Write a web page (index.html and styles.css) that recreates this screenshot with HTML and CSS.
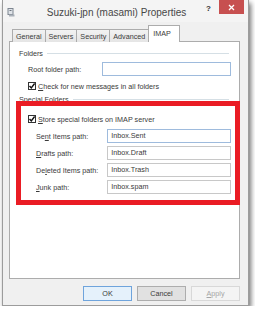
FILE: index.html
```html
<!DOCTYPE html>
<html lang="en">
<head>
    <meta charset="UTF-8">
    <title>Suzuki-jpn (masami) Properties</title>
    <link rel="stylesheet" href="styles.css">
</head>
<body>
<div class="window">
    <div class="titlebar">
        <svg class="app-icon" width="8" height="9" viewBox="0 0 8 9">
            <rect x="1" y="0.5" width="5" height="6" fill="#dfe3e8" stroke="#7d8590"/>
            <rect x="2" y="6.5" width="5.5" height="2" fill="#a9b0b8"/>
            <rect x="2.5" y="2" width="2" height="1" fill="#6b737c"/>
        </svg>
        <div class="title">Suzuki-jpn (masami) Properties</div>
        <div class="help">?</div>
        <div class="close">
            <svg width="7" height="7" viewBox="0 0 7 7">
                <path d="M1 1 L6 6 M6 1 L1 6" stroke="#fff" stroke-width="1.3"/>
            </svg>
        </div>
    </div>

    <div class="body">
        <div class="tabs">
            <div class="tab">General</div>
            <div class="tab">Servers</div>
            <div class="tab">Security</div>
            <div class="tab">Advanced</div>
            <div class="tab selected">IMAP</div>
        </div>

        <div class="panel">
            <div class="group-title"><span>Folders</span></div>
            <div class="row">
                <label class="field-label indent">Root folder path:</label>
                <div class="input focus"></div>
            </div>
            <div class="row check-row">
                <span class="checkbox">
                    <svg width="8" height="8" viewBox="0 0 8 8"><path d="M1.5 4 L3.3 6 L6.6 1.5" fill="none" stroke="#111" stroke-width="1.4"/></svg>
                </span>
                <span><u>C</u>heck for new messages in all folders</span>
            </div>

            <div class="group-title special"><span>Special Folders</span></div>
            <div class="row check-row">
                <span class="checkbox">
                    <svg width="8" height="8" viewBox="0 0 8 8"><path d="M1.5 4 L3.3 6 L6.6 1.5" fill="none" stroke="#111" stroke-width="1.4"/></svg>
                </span>
                <span><u>S</u>tore special folders on IMAP server</span>
            </div>
            <div class="row">
                <label class="field-label sub">Se<u>n</u>t Items path:</label>
                <div class="input focus">Inbox.Sent</div>
            </div>
            <div class="row">
                <label class="field-label sub"><u>D</u>rafts path:</label>
                <div class="input">Inbox.Draft</div>
            </div>
            <div class="row">
                <label class="field-label sub">De<u>l</u>eted Items path:</label>
                <div class="input">Inbox.Trash</div>
            </div>
            <div class="row">
                <label class="field-label sub"><u>J</u>unk path:</label>
                <div class="input">Inbox.spam</div>
            </div>

            <div class="highlight"></div>
        </div>

        <div class="buttons">
            <div class="button default">OK</div>
            <div class="button">Cancel</div>
            <div class="button disabled"><u>A</u>pply</div>
        </div>
    </div>
</div>
</body>
</html>
```

FILE: styles.css
```css
body {
    margin: 0;
    background: #fff;
    font-family: "Liberation Sans", Arial, sans-serif;
    font-size: 7.2px;
    color: #3a3a3a;
}

.window {
    margin-left: 2px;
    width: 245px;
    height: 305px;
    background: #f0f0f0;
    border: 1px solid #9c9c9c;
    border-top: none;
    box-shadow: 2px 3px 5px rgba(0, 0, 0, 0.55);
    display: flex;
    flex-direction: column;
}

.titlebar {
    height: 22px;
    display: flex;
    align-items: center;
    position: relative;
    background: #f4f4f4;
}

.app-icon {
    margin-left: 4px;
    margin-top: 2px;
}

.title {
    flex: 1;
    text-align: center;
    font-size: 10px;
    color: #474747;
    margin-left: 12px;
    margin-top: 2px;
}

.help {
    font-size: 8px;
    font-weight: bold;
    color: #333;
    margin-right: 8px;
    margin-bottom: 6px;
}

.close {
    width: 25px;
    height: 14px;
    margin-right: 4px;
    align-self: flex-start;
    background: #c75050;
    display: flex;
    align-items: center;
    justify-content: center;
}

.body {
    flex: 1;
    padding: 3px 8px 0 6px;
    display: flex;
    flex-direction: column;
}

.tabs {
    display: flex;
    align-items: flex-end;
    padding-left: 3px;
    height: 17px;
    margin-bottom: -1px;
    position: relative;
    z-index: 1;
}

.tab {
    height: 13px;
    line-height: 13px;
    padding: 0 3px;
    border: 1px solid #acacac;
    border-bottom: none;
    margin-right: -1px;
    background: linear-gradient(#f2f2f2, #e5e5e5);
    box-sizing: border-box;
    white-space: nowrap;
}

.tab.selected {
    height: 17px;
    line-height: 15px;
    padding: 0 8px 0 4px;
    background: #fff;
}

.panel {
    height: 238px;
    box-sizing: border-box;
    background: #fff;
    border: 1px solid #acacac;
    padding: 6px 8px 0 9px;
    display: flex;
    flex-direction: column;
    position: relative;
}

.group-title {
    height: 10px;
    display: flex;
    align-items: center;
    gap: 4px;
}

.group-title::after {
    content: "";
    flex: 1;
    border-top: 1px solid #d5dfe5;
    margin-right: 2px;
}

.group-title.special {
    margin-top: 1px;
}

.row {
    height: 14px;
    display: flex;
    align-items: center;
    margin-top: 3px;
}

.panel > .row:nth-child(2) {
    margin-top: 4px;
}

.group-title.special + .row {
    margin-top: 8px;
}

.field-label {
    width: 75px;
    white-space: nowrap;
}

.field-label.indent {
    padding-left: 9px;
}

.field-label.sub {
    padding-left: 17px;
}

.input {
    width: 130px;
    height: 14px;
    box-sizing: border-box;
    border: 1px solid #c8c8c8;
    background: #fff;
    padding-left: 3px;
    line-height: 12px;
}

.input.focus {
    border-color: #9ebbdd;
}

.check-row {
    padding-left: 9px;
    gap: 2px;
}

.checkbox {
    width: 8px;
    height: 8px;
    box-sizing: border-box;
    border: 1px solid #333;
    background: #fff;
    display: flex;
}

.checkbox svg {
    margin: -1px;
}

.highlight {
    position: absolute;
    left: 6px;
    top: 59px;
    width: 224px;
    height: 104px;
    box-sizing: border-box;
    border: 5px solid #ea1c24;
}

.buttons {
    display: flex;
    justify-content: flex-end;
    gap: 5px;
    margin-top: 7px;
}

.button {
    width: 49px;
    height: 15px;
    box-sizing: border-box;
    border: 1px solid #adadad;
    background: #e1e1e1;
    text-align: center;
    line-height: 13px;
}

.button.default {
    border-color: #6fa4dc;
    background: #e5f1fb;
}

.button.disabled {
    border-color: #d8d8d8;
    background: #f4f4f4;
    color: #a6a6a6;
}
```
